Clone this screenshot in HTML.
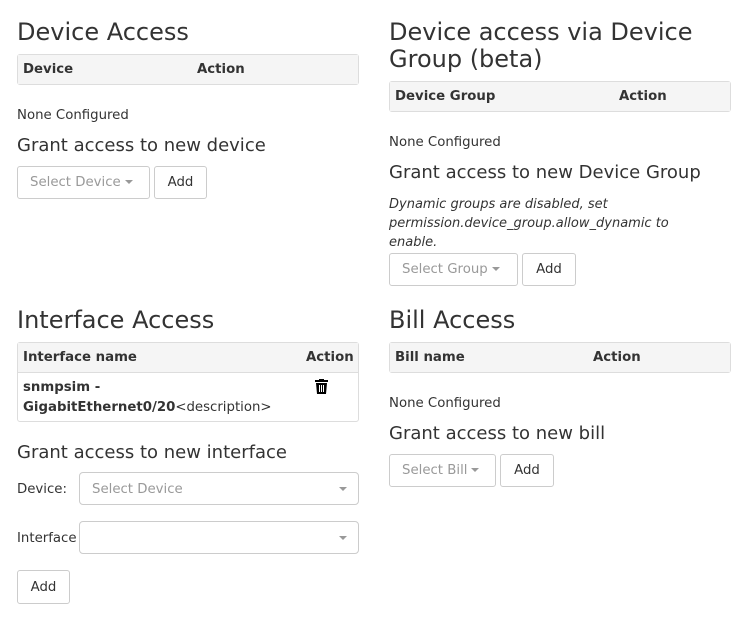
<!DOCTYPE html>
<html><head><meta charset="utf-8"><style>
*{box-sizing:border-box;margin:0;padding:0}
body{width:752px;height:630px;background:#fff;font-family:"DejaVu Sans","Liberation Sans",sans-serif;color:#333;font-size:13.3px;position:relative;overflow:hidden}
.a{position:absolute;white-space:nowrap}
h3{position:absolute;font-weight:normal;font-size:24px;line-height:27px;color:#333;white-space:nowrap}
h4{position:absolute;font-weight:normal;font-size:18px;line-height:20px;color:#333;white-space:nowrap}
.tbl{position:absolute;border:1px solid #ddd;border-radius:3px;background:#fff}
.th{background:#f5f5f5;height:29px;font-weight:bold;font-size:13.3px;position:relative}
.th span{position:absolute;top:7px}
.btn{position:absolute;border:1px solid #ccc;border-radius:3px;background:#fff;font-size:13.3px;line-height:32px;text-align:center;color:#333}
.sel{color:#999;text-align:left;padding-left:12px}
.caret{display:inline-block;width:0;height:0;border-left:4px solid transparent;border-right:4px solid transparent;border-top:4px solid #999;vertical-align:middle;margin-left:4px}
.inp{position:absolute;border:1px solid #ccc;border-radius:4px;background:#fff;height:33px;color:#999;padding-left:12px;line-height:33px}
.inp .caret{position:absolute;right:11px;top:14px}
</style></head><body>
<h3 style="left:17px;top:19px">Device Access</h3>
<div class="tbl" style="left:17px;top:54px;width:342px;height:31px"><div class="th"><span style="left:5px">Device</span><span style="left:179px">Action</span></div></div>
<div class="a" style="left:17px;top:108px">None Configured</div>
<h4 style="left:17px;top:136px">Grant access to new device</h4>
<div class="btn sel" style="left:17px;top:166px;width:133px;height:33px">Select Device<span class="caret"></span></div>
<div class="btn" style="left:154px;top:166px;width:53px;height:33px">Add</div>

<h3 style="left:389px;top:19px">Device access via Device</h3>
<h3 style="left:389px;top:46px">Group (beta)</h3>
<div class="tbl" style="left:389px;top:81px;width:342px;height:31px"><div class="th"><span style="left:5px">Device Group</span><span style="left:229px">Action</span></div></div>
<div class="a" style="left:389px;top:135px">None Configured</div>
<h4 style="left:389px;top:163px">Grant access to new Device Group</h4>
<div class="a" style="left:389px;top:195px;font-style:italic;font-size:13px;line-height:19px;white-space:normal;width:320px">Dynamic groups are disabled, set permission.device_group.allow_dynamic to enable.</div>
<div class="btn sel" style="left:389px;top:253px;width:129px;height:33px">Select Group<span class="caret"></span></div>
<div class="btn" style="left:522px;top:253px;width:54px;height:33px">Add</div>

<h3 style="left:17px;top:307px">Interface Access</h3>
<div class="tbl" style="left:17px;top:342px;width:342px;height:80px">
<div class="th" style="border-bottom:1px solid #ddd;height:30px"><span style="left:5px">Interface name</span><span style="left:288px">Action</span></div>
<div class="a" style="left:5px;top:35px;line-height:20px"><b>snmpsim -</b><br><b>GigabitEthernet0/20</b>&lt;description&gt;</div>
<svg class="a" style="left:297px;top:36px" width="14" height="16" viewBox="0 0 14 16"><rect x="0" y="1" width="13" height="2" fill="#000"/><rect x="4" y="0" width="5" height="2" fill="#000"/><path d="M1 4h11l-1 11H2z" fill="#000"/><rect x="4" y="6" width="1" height="7" fill="#fff"/><rect x="6" y="6" width="1" height="7" fill="#fff"/><rect x="8" y="6" width="1" height="7" fill="#fff"/></svg>
</div>
<h4 style="left:17px;top:443px">Grant access to new interface</h4>
<div class="a" style="left:17px;top:482px">Device:</div>
<div class="inp" style="left:79px;top:472px;width:280px">Select Device<span class="caret"></span></div>
<div class="a" style="left:17px;top:531px">Interface</div>
<div class="inp" style="left:79px;top:521px;width:280px"><span class="caret"></span></div>
<div class="btn" style="left:17px;top:570px;width:53px;height:34px;line-height:34px">Add</div>

<h3 style="left:389px;top:307px">Bill Access</h3>
<div class="tbl" style="left:389px;top:342px;width:342px;height:31px"><div class="th"><span style="left:5px">Bill name</span><span style="left:203px">Action</span></div></div>
<div class="a" style="left:389px;top:396px">None Configured</div>
<h4 style="left:389px;top:424px">Grant access to new bill</h4>
<div class="btn sel" style="left:389px;top:454px;width:107px;height:33px">Select Bill<span class="caret"></span></div>
<div class="btn" style="left:500px;top:454px;width:54px;height:33px">Add</div>
</body></html>
